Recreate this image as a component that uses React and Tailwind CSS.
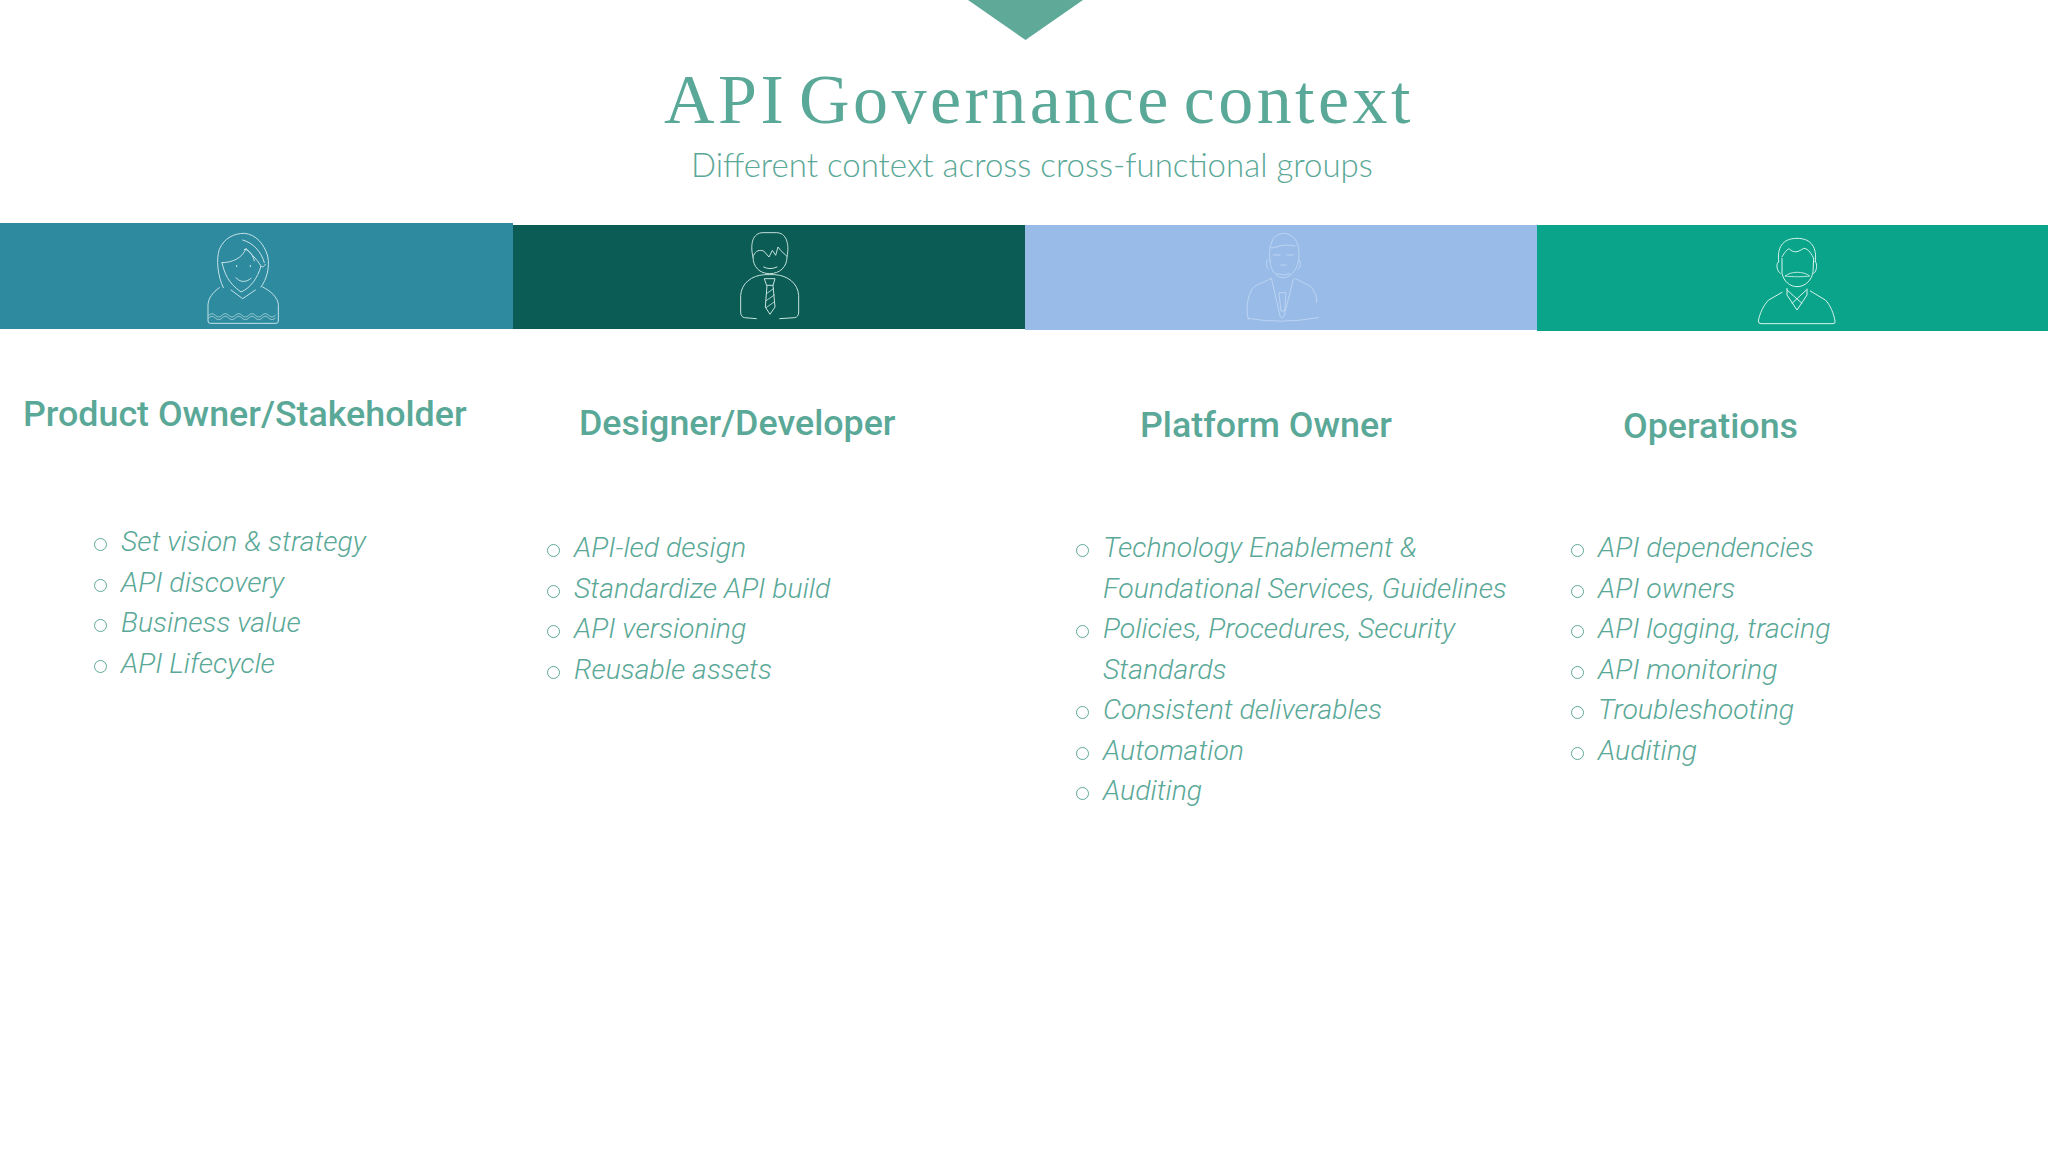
import React from 'react';

const ICON_STROKE = { fill: 'none', strokeWidth: 3, strokeLinecap: 'round', strokeLinejoin: 'round' };

function WomanIcon() {
  return (
    <svg width="75" height="95" viewBox="170 45 225 285" stroke="#c4e3e8" {...ICON_STROKE}>
      <path d="M222 215C205 180 200 130 210 100C225 65 255 52 285 52C320 55 345 85 355 120C362 155 352 190 335 213" />
      <path d="M218 140C225 170 235 200 275 228C305 215 325 185 335 150C340 155 345 152 348 145" />
      <path d="M218 140C250 140 280 125 290 97C300 110 320 125 335 150" />
      <path d="M285 100C300 100 312 120 315 135M280 72C310 80 335 105 345 140" />
      <path d="M262 148v4M303 148v4M260 185C272 200 290 200 305 187" />
      <path d="M245 222L280 248L318 222" />
      <path d="M210 215C190 230 178 245 176 265L176 315Q176 322 183 322L380 322Q387 322 387 315L387 265C385 245 365 225 340 213" />
      <path d="M178 298q10-10 20 0t20 0t20 0t20 0t20 0t20 0t20 0t20 0t20 0t20 0M178 306q10-10 20 0t20 0t20 0t20 0t20 0t20 0t20 0t20 0t20 0t20 0" strokeWidth="2" />
    </svg>
  );
}

function DesignerIcon() {
  return (
    <svg width="62" height="90" viewBox="268 52 186 270" stroke="#c5e2dc" {...ICON_STROKE}>
      <path d="M310 130C300 90 310 57 340 57L380 57C410 57 420 90 412 130C412 160 390 180 360 180C330 180 310 160 310 130Z" />
      <path d="M312 125C318 110 330 108 342 112L358 130L368 110L378 125L385 100C395 115 405 120 412 128" />
      <path d="M342 160Q360 170 382 160" />
      <path d="M320 315L285 312Q273 310 273 295L273 245C275 210 305 185 345 183L375 183C415 185 445 210 447 245L447 295Q447 310 435 312L390 315" />
      <path d="M345 195L376 195L370 215L352 215ZM352 215L347 280L361 302L376 280L370 215" />
      <path d="M350 240L372 225M348 262L374 244M349 282L375 264" strokeWidth="2.5" />
    </svg>
  );
}

function PlatformIcon() {
  return (
    <svg width="75" height="93" viewBox="195 50 225 279" stroke="#c3d9f3" {...ICON_STROKE} strokeWidth="2.5">
      <path d="M270 140C265 110 270 60 310 57C350 58 362 100 355 140C350 170 330 190 310 190C290 190 272 170 270 140Z" />
      <path d="M270 100C285 105 300 85 345 95" />
      <path d="M264 135C256 140 258 160 266 165M356 135C364 140 362 160 354 165" />
      <path d="M280 122h20M320 122h20M302 152h16M290 178q20 8 40 0" />
      <path d="M205 315C195 280 205 230 225 215L275 192M345 192L390 215C405 230 412 250 410 265" />
      <path d="M205 312Q300 330 415 310" />
      <path d="M275 195L300 305L306 312L312 305L340 195" />
      <path d="M298 235L318 235L314 290L304 290Z" />
    </svg>
  );
}

function OperationsIcon() {
  return (
    <svg width="80" height="90" viewBox="470 66 240 264" stroke="#d6f3ec" {...ICON_STROKE}>
      <path d="M535 140C530 100 545 70 590 70C635 70 650 100 645 140" />
      <path d="M545 125C555 110 565 95 570 105C585 115 595 110 610 100C625 100 635 120 640 130" />
      <path d="M545 130L545 175C550 200 570 215 590 215C615 215 635 195 638 170L640 130" />
      <path d="M555 183C570 168 610 168 628 183C610 186 575 186 555 183Z" strokeWidth="2.5" />
      <path d="M535 140C525 145 530 170 540 175M645 140C652 145 650 170 640 175" />
      <path d="M560 220L560 240L590 285L620 240L620 222M560 225L605 265M618 225L575 265" />
      <path d="M545 232L505 255C490 270 478 295 474 318Q474 326 482 326L698 326Q706 326 704 318C700 295 690 270 675 255L630 228" />
    </svg>
  );
}

function Bullets({ items, className }) {
  return (
    <ul className={className}>
      {items.map(item => (
        <li key={item} className="flex items-start">
          <span className="mt-[16px] h-[13px] w-[13px] shrink-0 rounded-full border border-[#5fa999]" />
          <span className="ml-[14px] whitespace-pre-line italic font-light">{item}</span>
        </li>
      ))}
    </ul>
  );
}

export default function App() {
  return (
    <div className="h-[1151px] w-[2048px] overflow-hidden bg-white font-['Roboto',sans-serif] text-[#5aa897]">
      <div className="ml-[968px] h-[40px] w-[115px] bg-[#5fa999] [clip-path:polygon(0_0,100%_0,50%_100%)]" />

      <h1 className="mt-[27px] ml-[664px] whitespace-nowrap font-['Liberation_Serif',serif] text-[70px] leading-[66px] tracking-[3.45px] [word-spacing:-9px]">
        API Governance context
      </h1>
      <p className="mt-[11px] ml-[691px] whitespace-nowrap font-['Lato',sans-serif] text-[33px] leading-[40px] font-light">
        Different context across cross-functional groups
      </p>

      <div className="mt-[39px] grid grid-cols-[513px_512px_512px_511px] items-start">
        <section>
          <div className="flex h-[106px] items-start bg-[#2e8b9f] pt-[8px] pl-[206px]">
            <WomanIcon />
          </div>
          <h2 className="mt-[65px] ml-[23px] whitespace-nowrap text-[35.8px] leading-[40px] font-medium">Product Owner/Stakeholder</h2>
          <Bullets
            className="mt-[88px] ml-[94px] text-[28.4px] leading-[40.7px]"
            items={['Set vision & strategy', 'API discovery', 'Business value', 'API Lifecycle']}
          />
        </section>

        <section className="pt-[2px]">
          <div className="flex h-[104px] items-start bg-[#0b5c55] pt-[6px] pl-[226px]">
            <DesignerIcon />
          </div>
          <h2 className="mt-[74px] ml-[66px] whitespace-nowrap text-[35.8px] leading-[40px] font-medium">Designer/Developer</h2>
          <Bullets
            className="mt-[85px] ml-[34px] text-[28.4px] leading-[40.7px]"
            items={['API-led design', 'Standardize API build', 'API versioning', 'Reusable assets']}
          />
        </section>

        <section className="pt-[2px]">
          <div className="flex h-[105px] items-start bg-[#98bbe8] pt-[6px] pl-[220px]">
            <PlatformIcon />
          </div>
          <h2 className="mt-[75px] ml-[115px] whitespace-nowrap text-[35.8px] leading-[40px] font-medium">Platform Owner</h2>
          <Bullets
            className="mt-[83px] ml-[51px] text-[28.4px] leading-[40.5px]"
            items={[
              'Technology Enablement &\nFoundational Services, Guidelines',
              'Policies, Procedures, Security\nStandards',
              'Consistent deliverables',
              'Automation',
              'Auditing',
            ]}
          />
        </section>

        <section className="pt-[2px]">
          <div className="flex h-[106px] items-start bg-[#0aa48a] pt-[11px] pl-[220px]">
            <OperationsIcon />
          </div>
          <h2 className="mt-[75px] ml-[86px] whitespace-nowrap text-[35.8px] leading-[40px] font-medium">Operations</h2>
          <Bullets
            className="mt-[82px] ml-[34px] text-[28.4px] leading-[40.5px]"
            items={['API dependencies', 'API owners', 'API logging, tracing', 'API monitoring', 'Troubleshooting', 'Auditing']}
          />
        </section>
      </div>
    </div>
  );
}
